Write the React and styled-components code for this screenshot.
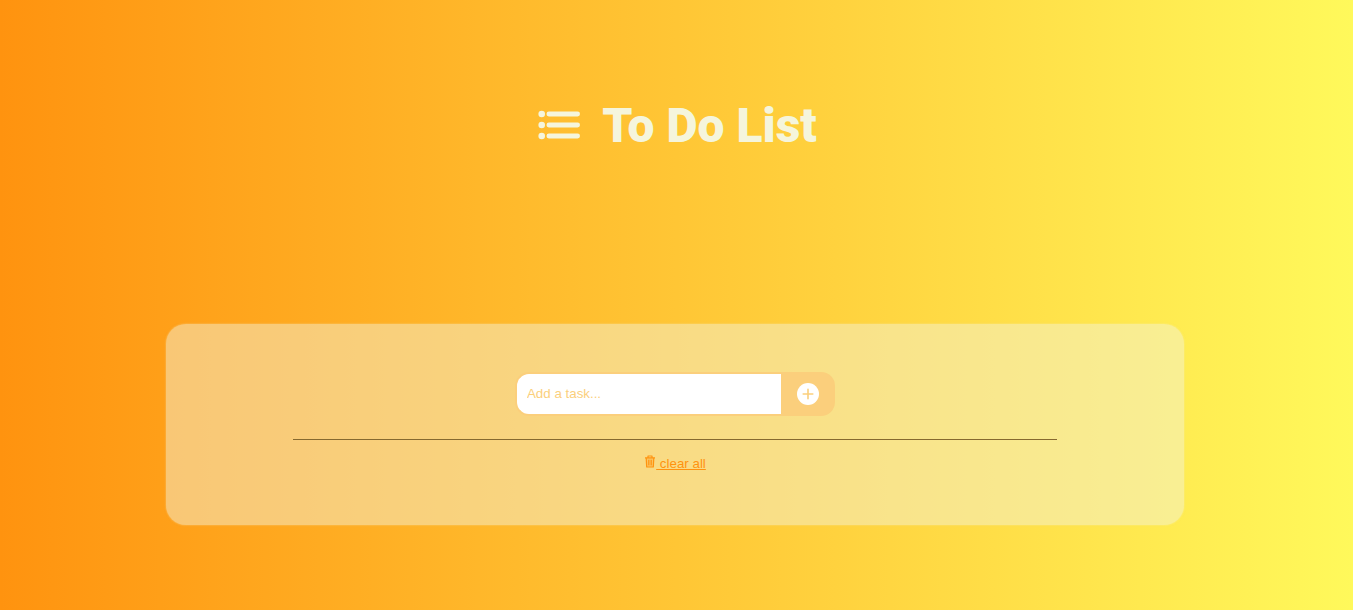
import React, { useState } from "react";
import styled, { createGlobalStyle } from "styled-components";

const GlobalStyle = createGlobalStyle`
  * { box-sizing: border-box; }
  body {
    margin: 0;
    min-height: 100vh;
    font-family: "Liberation Sans", Arial, sans-serif;
    background: linear-gradient(90deg, #ff930f 0%, #fff95b 100%);
  }
`;

const Page = styled.div`
  display: flex;
  flex-direction: column;
  align-items: center;
  min-height: 100vh;
  padding: 96px 0 84px;
`;

const Header = styled.header`
  display: flex;
  align-items: flex-start;
  gap: 22px;
  color: beige;
  margin-bottom: 168px;
  padding-left: 2px;

  svg { margin-top: 14px; }
`;

const Title = styled.h1`
  margin: 0;
  font-family: Roboto, sans-serif;
  font-size: 48px;
  font-weight: 900;
  line-height: 60px;
`;

const Card = styled.main`
  display: flex;
  flex-direction: column;
  align-items: center;
  width: 75.2%;
  margin-right: 3px;
  padding: 48px 0 53px;
  border-radius: 20px;
  background: rgba(243, 243, 220, 0.48);
  box-shadow: 0 0 2px rgba(245, 245, 220, 0.5);
`;

const Form = styled.form`
  display: flex;
  width: 320px;
  height: 44px;
`;

const TaskInput = styled.input`
  flex: 1;
  min-width: 0;
  padding: 0 10px 2px;
  border: 2px solid #fbcf7c;
  border-right: 0;
  border-radius: 14px 0 0 14px;
  outline: 0;
  background: #fff;
  color: #ff930f;
  font-family: inherit;
  &::placeholder { color: #fbcf7c; opacity: 1; }
`;

const AddButton = styled.button`
  display: flex;
  align-items: center;
  justify-content: center;
  width: 54px;
  padding: 0;
  border: 0;
  border-radius: 0 14px 14px 0;
  background: #fbcf7c;
  color: #fff;
  cursor: pointer;
`;

const Divider = styled.hr`
  width: 75%;
  height: 1px;
  margin: 23px 0 15px;
  border: 0;
  background: #86692f;
`;

const ClearButton = styled.button`
  padding: 0;
  border: 0;
  background: none;
  color: #ff930f;
  font-family: inherit;
  line-height: 17px;
  text-decoration: underline;
  cursor: pointer;
`;

const ListIcon = () => (
  <svg width="42" height="30" viewBox="0 0 42 30" fill="currentColor" aria-hidden="true">
    {[4, 15, 26].map((y) => (
      <g key={y}>
        <circle cx="3.7" cy={y} r="3.3" />
        <rect x="8.5" y={y - 2.4} width="33.5" height="4.8" rx="2.4" />
      </g>
    ))}
  </svg>
);

const PlusIcon = () => (
  <svg width="22" height="22" viewBox="0 0 22 22" aria-hidden="true">
    <circle cx="11" cy="11" r="11" fill="currentColor" />
    <path d="M11 6.2v9.6M6.2 11h9.6" stroke="#fbcf7c" strokeWidth="1.6" strokeLinecap="round" />
  </svg>
);

const TrashIcon = () => (
  <svg width="12" height="13" viewBox="0 0 12 13" fill="none" stroke="currentColor" aria-hidden="true">
    <path d="M1 2.8h10M4 2.6V1h4v1.6" strokeWidth="1.2" strokeLinejoin="round" />
    <path d="M2.2 3l.5 9h6.6l.5-9" fill="currentColor" fillOpacity=".3" strokeWidth="1.2" strokeLinejoin="round" />
    <path d="M4.5 4.8v5.6M6 4.8v5.6M7.5 4.8v5.6" strokeWidth=".8" />
  </svg>
);

export default function App() {
  const [task, setTask] = useState("");
  return (
    <Page>
      <GlobalStyle />
      <Header>
        <ListIcon />
        <Title>To Do List</Title>
      </Header>
      <Card>
        <Form onSubmit={(e) => e.preventDefault()}>
          <TaskInput
            aria-label="Add a task"
            placeholder="Add a task..."
            value={task}
            onChange={(e) => setTask(e.target.value)}
          />
          <AddButton aria-label="Add"><PlusIcon /></AddButton>
        </Form>
        <Divider />
        <ClearButton type="button"><TrashIcon /> clear all</ClearButton>
      </Card>
    </Page>
  );
}
